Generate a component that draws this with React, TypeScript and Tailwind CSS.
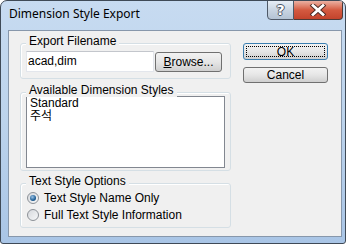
import React from "react";

const F = { fontFamily: '"Liberation Sans", Arial, "Noto Sans CJK KR", sans-serif' };

function Radio({ checked, label }: { checked?: boolean; label: string }) {
  return (
    <div className="flex items-center h-[17px]">
      <div className="w-[12px] h-[12px] rounded-full border border-[#8c9197] bg-gradient-to-br from-[#d6d9dd] to-[#f7f8f9] flex items-center justify-center ml-[6px]">
        {checked && (
          <div className="w-[6px] h-[6px] rounded-full bg-[radial-gradient(circle_at_40%_35%,#9cc3e6,#1f5f95_60%,#17456e)]" />
        )}
      </div>
      <span className="ml-[5px] text-[12px] leading-[14px] text-black">{label}</span>
    </div>
  );
}

function Group({
  label,
  className,
  children,
}: {
  label: string;
  className: string;
  children?: React.ReactNode;
}) {
  return (
    <div
      className={
        "relative border border-[#d5dfe5] rounded-[3px] shadow-[inset_1px_1px_0_#ffffff] " + className
      }
    >
      <div className="absolute left-[5px] -top-[10px] px-[3px] bg-[#f0f0f0] text-[12px] leading-[14px] text-black">
        {label}
      </div>
      {children}
    </div>
  );
}

export default function App() {
  return (
    <div className="w-[349px] h-[245px] bg-white" style={F}>
      <div className="w-[346px] h-[244px] rounded-t-[7px] rounded-b-[3px] border border-[#3f4a57] bg-gradient-to-b from-[#c7dbf1] via-[#bcd3ec] to-[#a9c5e6] flex flex-col overflow-hidden">
        {/* Title bar */}
        <div className="h-[29px] flex items-start shrink-0 relative">
          <div
            className="pl-[8px] pt-[5px] text-[12px] leading-[16px] text-black"
            style={{ fontFamily: '"Noto Sans", "Liberation Sans", sans-serif' }}
          >
            Dimension Style Export
          </div>
          <div className="ml-auto flex mr-[2px] -mt-[1px]">
            <div className="w-[27px] h-[20px] border border-[#4e5967] rounded-bl-[4px] bg-gradient-to-b from-[#e6edf5] via-[#c9d5e2] to-[#b3c3d4] flex items-center justify-center">
              <span
                className="text-[14px] leading-[14px] font-bold text-white"
                style={{
                  fontFamily: '"DejaVu Sans", sans-serif',
                  textShadow:
                    "1px 0 0 #4a5564, -1px 0 0 #4a5564, 0 1px 0 #4a5564, 0 -1px 0 #4a5564",
                }}
              >
                ?
              </span>
            </div>
            <div className="w-[49px] h-[20px] border border-l-0 border-[#4e3a36] rounded-br-[4px] bg-gradient-to-b from-[#eab0a2] via-[#d45a40] to-[#c3432c] flex items-center justify-center">
              <svg width="18" height="12" viewBox="0 0 18 12">
                <path
                  d="M4 1.5 L14 10.5 M14 1.5 L4 10.5"
                  stroke="#4a2a24"
                  strokeWidth="4.6"
                  strokeLinecap="square"
                />
                <path
                  d="M4 1.5 L14 10.5 M14 1.5 L4 10.5"
                  stroke="#ffffff"
                  strokeWidth="2.8"
                  strokeLinecap="square"
                />
              </svg>
            </div>
          </div>
        </div>
        {/* Client area */}
        <div className="ml-[7px] mr-[3px] h-[207px] border border-[#8797ab] bg-[#f0f0f0] flex">
          {/* left column */}
          <div className="ml-[11px] w-[211px] flex flex-col">
            <Group label="Export Filename" className="mt-[12px] h-[36px]">
              <div className="flex pl-[5px] pt-[7px]">
                <div className="w-[128px] h-[21px] bg-white border border-[#e3e6ec] border-t-[#c3c6cc] text-[12px] leading-[19px] pl-[1px] text-black">
                  acad,dim
                </div>
                <div className="ml-[1px] mt-[1px] w-[67px] h-[20px] rounded-[3px] border border-[#707070] bg-gradient-to-b from-[#f2f2f2] via-[#e6e6e6] to-[#cfcfcf] text-[12px] leading-[18px] text-center text-black">
                  <span className="underline">B</span>rowse...
                </div>
              </div>
            </Group>
            <Group label="Available Dimension Styles" className="mt-[13px] h-[79px]">
              <div className="pl-[5px] pt-[3px]">
                <div className="w-[199px] h-[72px] bg-white border border-[#828790] pl-[3px] text-[12px] leading-[13px] text-black">
                  <div>Standard</div>
                  <div>주석</div>
                </div>
              </div>
            </Group>
            <Group label="Text Style Options" className="mt-[12px] h-[45px]">
              <div className="pt-[5px] flex flex-col">
                <Radio checked label="Text Style Name Only" />
                <Radio label="Full Text Style Information" />
              </div>
            </Group>
          </div>
          {/* right column */}
          <div className="ml-[12px] flex flex-col">
            <div className="mt-[12px] w-[85px] h-[17px] rounded-[3px] border border-[#3c7fb1] bg-gradient-to-b from-[#f2f2f2] via-[#e6e6e6] to-[#cfcfcf] p-[2px]">
              <div className="w-full h-full border border-dotted border-black text-[12px] leading-[11px] text-center text-black">
                OK
              </div>
            </div>
            <div className="mt-[7px] w-[85px] h-[16px] rounded-[3px] border border-[#707070] bg-gradient-to-b from-[#f2f2f2] via-[#e6e6e6] to-[#cfcfcf] text-[12px] leading-[14px] text-center text-black">
              Cancel
            </div>
          </div>
        </div>
      </div>
    </div>
  );
}
